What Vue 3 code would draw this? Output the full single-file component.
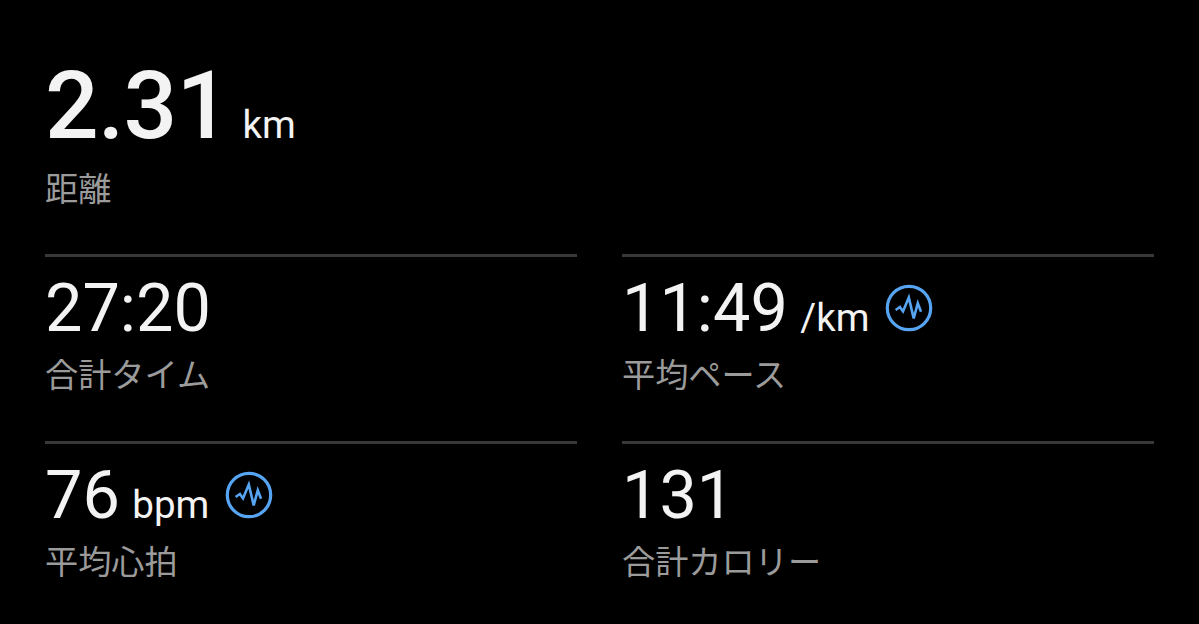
<template>
  <main class="summary">
    <section class="metric distance">
      <div class="value-row">
        <span class="value">2.31</span>
        <span class="unit">km</span>
      </div>
      <div class="label">距離</div>
    </section>
    <div class="metric-grid">
      <section v-for="item in metrics" :key="item.label" class="metric">
        <div class="value-row">
          <span class="value">{{ item.value }}</span>
          <span v-if="item.unit" class="unit">{{ item.unit }}</span>
          <svg v-if="item.chart" class="chart-icon" viewBox="0 0 48 48">
            <circle cx="24" cy="24" r="21.7" />
            <path d="M10.6 26l4.3-3 3.1 4.4 5.8-14 4.9 21 4.1-15.2 3.2 8.6" />
          </svg>
        </div>
        <div class="label">{{ item.label }}</div>
      </section>
    </div>
  </main>
</template>

<script setup>
const metrics = [
  { value: '27:20', label: '合計タイム' },
  { value: '11:49', unit: '/km', label: '平均ペース', chart: true },
  { value: '76', unit: 'bpm', label: '平均心拍', chart: true },
  { value: '131', label: '合計カロリー' },
]
</script>

<style>
body {
  margin: 0;
  background: #000;
}
</style>

<style scoped>
.summary {
  box-sizing: border-box;
  width: 1199px;
  height: 624px;
  padding: 50px 44px 0 45px;
  overflow: hidden;
  background: #000;
  color: #f3f3f3;
  font-family: Roboto, "Noto Sans CJK JP", sans-serif;
}

.value-row {
  display: flex;
  align-items: baseline;
  white-space: nowrap;
}

.value {
  font-size: 66.6px;
  line-height: 78px;
}

.unit {
  margin-left: 12.5px;
  font-size: 38.5px;
  line-height: 44px;
}

.label {
  margin-top: 5px;
  color: #9b9b9b;
  font-size: 33.2px;
  line-height: 48px;
}

.distance {
  height: 204px;
}

.distance .value {
  font-size: 94.5px;
  font-weight: 500;
  line-height: 112px;
  letter-spacing: -0.7px;
}

.distance .unit {
  margin-left: 13px;
}

.distance .label {
  margin-top: 4px;
}

.metric-grid {
  display: grid;
  grid-template-columns: 532px 532px;
  grid-auto-rows: 187px;
  column-gap: 45px;
}

.metric-grid .metric {
  box-sizing: border-box;
  padding-top: 12px;
  border-top: 3px solid #383838;
}

.chart-icon {
  align-self: center;
  width: 48px;
  height: 48px;
  margin-left: 15.5px;
  fill: none;
  stroke: #56a4f2;
  stroke-width: 3.2;
}

.chart-icon path {
  stroke-width: 2.6;
}
</style>
